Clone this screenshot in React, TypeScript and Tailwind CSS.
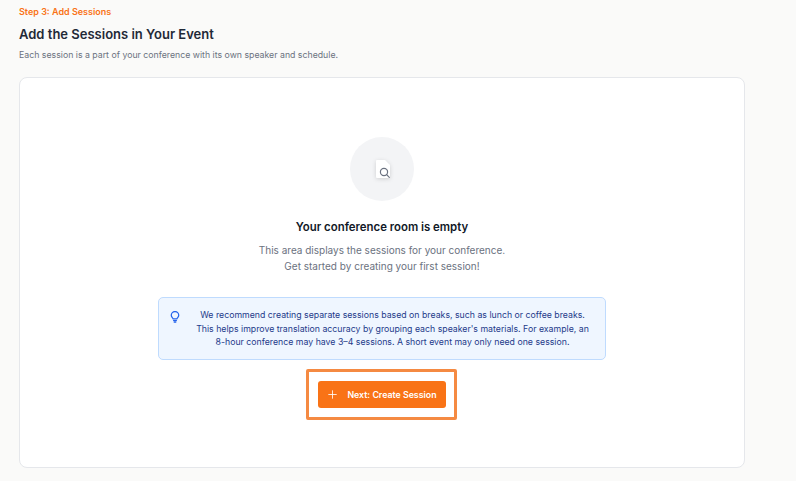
import { Plus } from 'lucide-react';

function Lightbulb() {
  return (
    <svg width="10" height="12" viewBox="0 0 12 14" fill="none" stroke="#2563eb" strokeWidth="1.5" strokeLinecap="round" strokeLinejoin="round">
      <path d="M3.8 9.2C3.6 8.2 1.5 7.2 1.5 4.9a4.5 4.5 0 0 1 9 0c0 2.3-2.1 3.3-2.3 4.3z" />
      <path d="M4.3 11.2h3.4M5 13h2" />
    </svg>
  );
}

function EmptyIcon() {
  return (
    <div className="w-16 h-16 rounded-full bg-[#f3f4f6] flex items-center justify-center">
      <svg width="24" height="24" viewBox="0 0 24 24" fill="none" className="overflow-visible drop-shadow-sm">
        <path d="M6 4a1 1 0 0 1 1-1h8l5 5v12a1 1 0 0 1-1 1H7a1 1 0 0 1-1-1z" fill="#ffffff" />
        <circle cx="14" cy="15" r="3.6" stroke="#6b7280" strokeWidth="1.2" />
        <path d="M16.7 17.7l2.6 2.6" stroke="#6b7280" strokeWidth="1.2" strokeLinecap="round" />
      </svg>
    </div>
  );
}

export default function App() {
  return (
    <div className="w-[796px] h-[481px] overflow-hidden bg-[#fafaf9] font-['Inter',sans-serif] pl-[19px] pt-[6px]">
      <p className="text-[9px] leading-[12px] font-semibold text-[#f97316]">Step 3: Add Sessions</p>
      <h1 className="mt-[6px] text-[13px] leading-[20px] font-semibold text-[#1f2937]">Add the Sessions in Your Event</h1>
      <p className="mt-[5px] text-[8.75px] leading-[12px] text-[#6b7280]">
        Each session is a part of your conference with its own speaker and schedule.
      </p>
      <div className="mt-[16px] w-[726px] h-[391px] bg-white border border-[#e5e7eb] rounded-lg flex flex-col items-center pt-[59px]">
        <EmptyIcon />
        <h2 className="mt-[17px] text-[11.4px] leading-[18px] font-semibold text-[#111827]">Your conference room is empty</h2>
        <p className="mt-[6px] text-[10px] leading-[16px] text-[#6b7280] text-center">
          This area displays the sessions for your conference.
          <br />
          Get started by creating your first session!
        </p>
        <div className="mt-[23px] w-[448px] h-[63px] bg-[#eff6ff] border border-[#bfdbfe] rounded-[5px] flex items-center pl-[11px] pr-[10px]">
          <div className="shrink-0 mb-[24px]">
            <Lightbulb />
          </div>
          <p className="flex-1 text-[8.75px] leading-[13.5px] text-[#1e3a8a] text-center pl-[10px] pt-[2px]">
            We recommend creating separate sessions based on breaks, such as lunch or coffee breaks.
            <br />
            This helps improve translation accuracy by grouping each speaker's materials. For example, an
            <br />
            8-hour conference may have 3–4 sessions. A short event may only need one session.
          </p>
        </div>
        <div className="mt-[9px] mr-[2px] border-[3px] border-[#f58a42] rounded-[2px] pl-[9px] pr-[8px] py-[9px]">
          <button className="w-[128px] h-[27px] bg-[#f97316] rounded-[3px] flex items-center justify-center gap-[8px] text-white text-[8.8px] font-semibold">
            <Plus size={13} strokeWidth={1.5} />
            Next: Create Session
          </button>
        </div>
      </div>
    </div>
  );
}
